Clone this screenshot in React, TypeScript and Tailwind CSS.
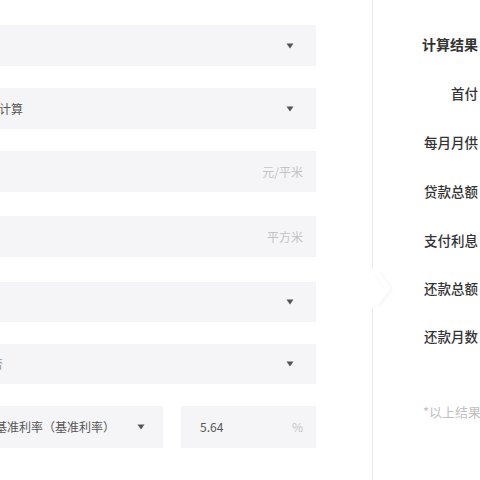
import React from "react";

const font = { fontFamily: '"Noto Sans CJK SC", "Noto Sans", sans-serif' };

function Caret() {
  return (
    <svg width="8" height="6" viewBox="0 0 8 6" className="shrink-0">
      <path d="M0.5 0.5 L7.5 0.5 L4 5.5 Z" fill="#555" />
    </svg>
  );
}

export default function App() {
  return (
    <div className="relative h-[480px] w-[480px] overflow-hidden bg-white" style={font}>
      <div className="flex h-full">
        {/* left form column */}
        <div className="flex w-[316px] shrink-0 flex-col pt-[25px]">
          <div className="flex h-[41px] items-center justify-end bg-[#f5f5f7] pr-[22px]">
            <Caret />
          </div>
          <div className="mt-[22px] flex h-[41px] items-center justify-between overflow-hidden bg-[#f5f5f7] pr-[22px]">
            <span className="ml-[-25px] whitespace-nowrap text-[12px] text-[#555]">按揭计算</span>
            <Caret />
          </div>
          <div className="mt-[22px] flex h-[41px] items-center justify-end bg-[#f5f5f7] pr-[13px]">
            <span className="text-[12px] text-[#c4c4c4]">元/平米</span>
          </div>
          <div className="mt-[24px] flex h-[41px] items-center justify-end bg-[#f5f5f7] pr-[13px]">
            <span className="text-[12px] text-[#c4c4c4]">平方米</span>
          </div>
          <div className="mt-[25px] flex h-[40px] items-center justify-end bg-[#f5f5f7] pr-[22px]">
            <Caret />
          </div>
          <div className="mt-[22px] flex h-[40px] items-center justify-between overflow-hidden bg-[#f5f5f7] pr-[22px]">
            <span className="ml-[-9px] whitespace-nowrap text-[12px] text-[#999]">否</span>
            <Caret />
          </div>
          <div className="mt-[22px] flex h-[42px] gap-[18px]">
            <div className="flex w-[163px] items-center justify-between overflow-hidden bg-[#f5f5f7] pr-[18px]">
              <span className="ml-[-5px] whitespace-nowrap text-[12px] text-[#555]">基准利率（基准利率）</span>
              <Caret />
            </div>
            <div className="flex flex-1 items-center justify-between bg-[#f5f5f7] pl-[19px] pr-[13px]">
              <span className="text-[12px] text-[#555]">5.64</span>
              <span className="text-[12px] text-[#c4c4c4]">%</span>
            </div>
          </div>
        </div>

        {/* divider */}
        <div className="relative ml-[56px] w-px shrink-0 bg-[#e9e9e9]">
          <div className="absolute left-[-2px] top-[268px] h-[40px] w-[26px] bg-white">
            <svg width="26" height="40" viewBox="0 0 26 40" style={{ filter: "drop-shadow(1px 1px 1.5px rgba(0,0,0,0.05))" }}>
              <path d="M6 4 L18 20 L6 36" fill="none" stroke="#fff" strokeWidth="5" strokeLinejoin="round" />
            </svg>
          </div>
        </div>

        {/* results */}
        <div className="flex w-[107px] min-w-0 shrink-0 flex-col items-end overflow-hidden pr-[2px] pt-[34px]">
          <div className="whitespace-nowrap text-[14px] font-bold leading-[20px] text-[#333]">计算结果</div>
          <div className="mt-[29px] whitespace-nowrap text-[13.5px] font-medium leading-[20px] text-[#333]">首付</div>
          <div className="mt-[29px] whitespace-nowrap text-[13.5px] font-medium leading-[20px] text-[#333]">每月月供</div>
          <div className="mt-[29px] whitespace-nowrap text-[13.5px] font-medium leading-[20px] text-[#333]">贷款总额</div>
          <div className="mt-[29px] whitespace-nowrap text-[13.5px] font-medium leading-[20px] text-[#333]">支付利息</div>
          <div className="mt-[28px] whitespace-nowrap text-[13.5px] font-medium leading-[20px] text-[#333]">还款总额</div>
          <div className="mt-[28px] whitespace-nowrap text-[13.5px] font-medium leading-[20px] text-[#333]">还款月数</div>
          <div className="mt-[56px] w-full whitespace-nowrap pl-[50px] text-[13px] leading-[20px] text-[#c0c0c0]">*以上结果仅供参考</div>
        </div>
      </div>
    </div>
  );
}
